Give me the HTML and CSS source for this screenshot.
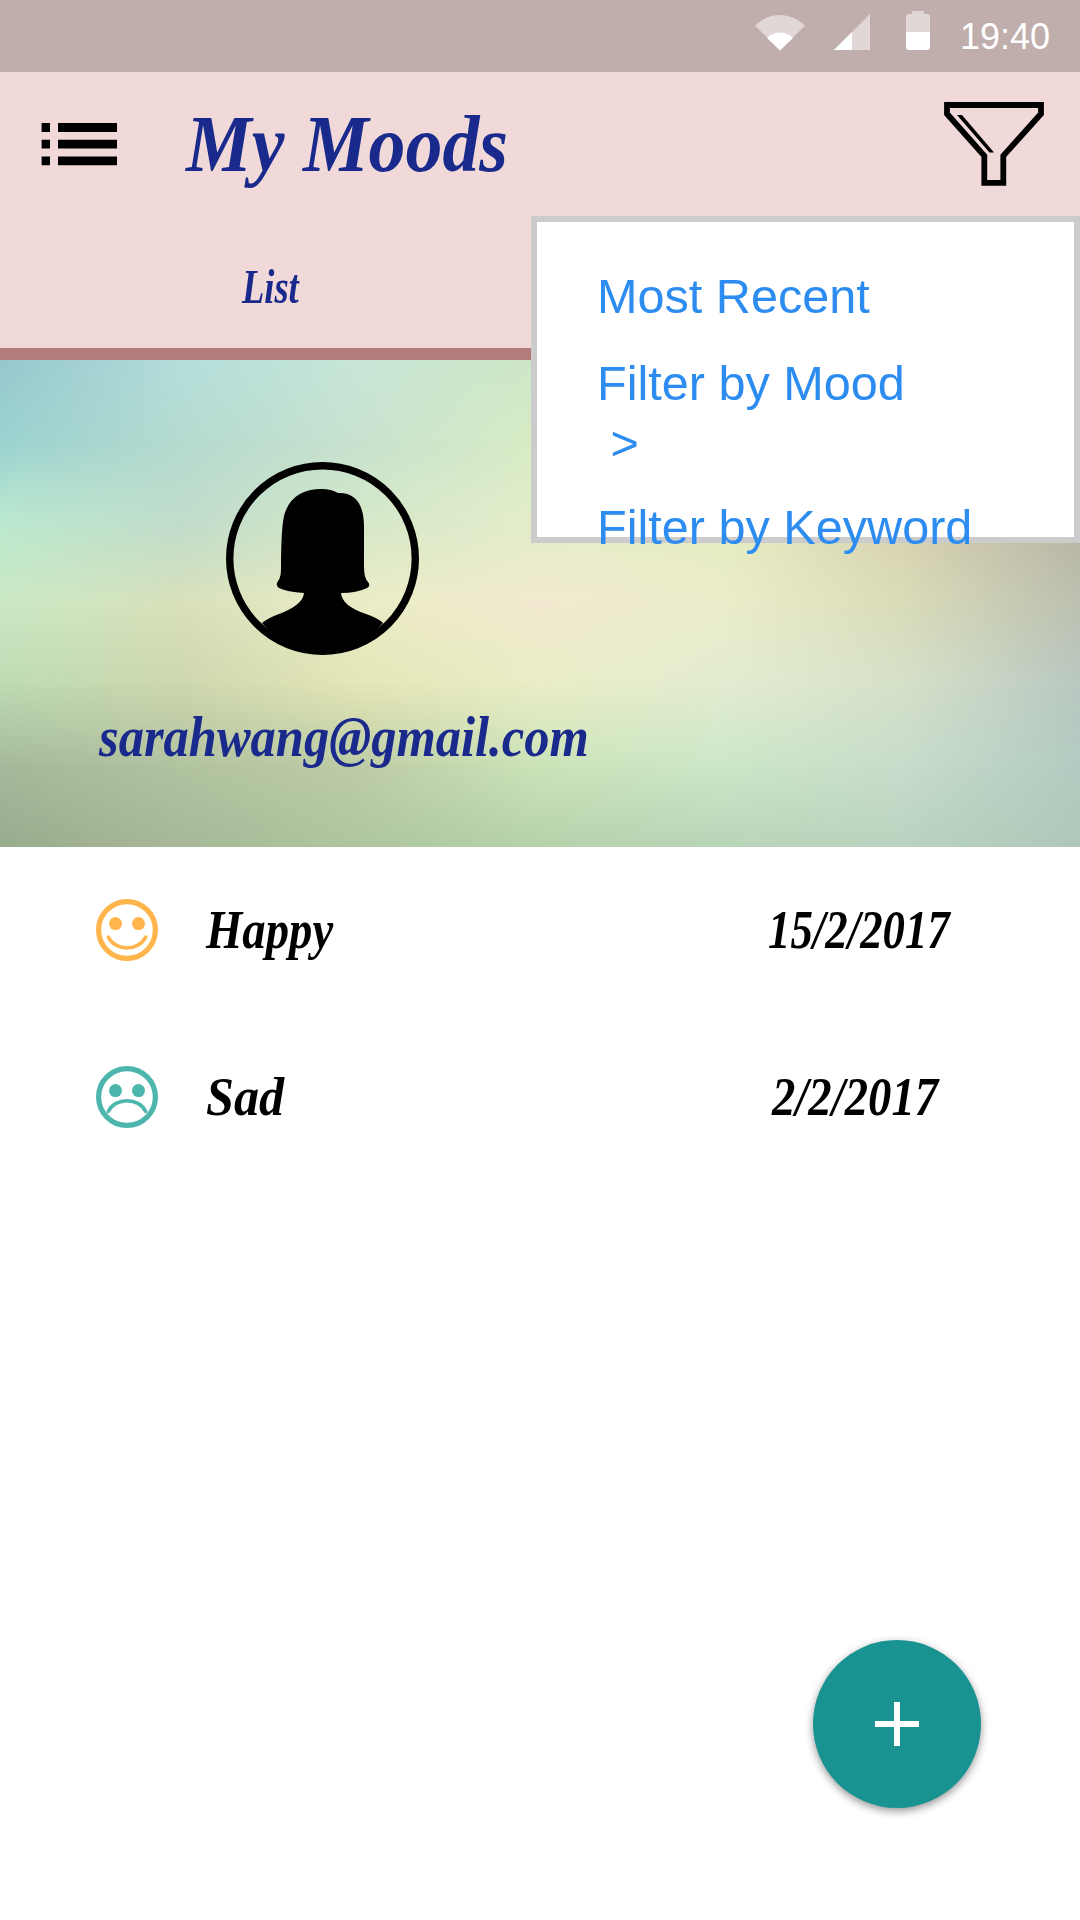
FILE: index.html
```html
<!DOCTYPE html>
<html lang="en">
<head>
<meta charset="utf-8">
<title>My Moods</title>
<link rel="stylesheet" href="styles.css">
</head>
<body>
<div class="screen">
  <div class="status-bar">
    <svg class="wifi" width="50" height="36" viewBox="0 0 50 36"><path d="M0 10.5Q11 0 25 0T50 10.5L25 35.5Z" fill="#fff" fill-opacity=".5"/><path d="M12 23Q18 17.5 25 17.5T38 23L25 35.5Z" fill="#fff"/></svg>
    <svg class="signal" width="36" height="36" viewBox="0 0 36 36"><path d="M0 36L36 0V36Z" fill="#fff" fill-opacity=".5"/><path d="M0 36L18 18V36Z" fill="#fff"/></svg>
    <svg class="battery" width="24" height="39" viewBox="0 0 24 39"><path d="M0 21V6Q0 3 3 3H6V0H18V3H21Q24 3 24 6V21Z" fill="#fff" fill-opacity=".5"/><path d="M0 21H24V36Q24 39 21 39H3Q0 39 0 36Z" fill="#fff"/></svg>
    <span class="time">19:40</span>
  </div>

  <header class="header">
    <div class="toolbar">
      <svg class="menu-icon" width="76" height="43" viewBox="0 0 76 43"><path d="M.6 0H9V9H.6ZM17 0H76V9H17ZM.6 16.8H9V25.5H.6ZM17 16.8H76V25.5H17ZM.6 33.5H9V42.3H.6ZM17 33.5H76V42.3H17Z"/></svg>
      <h1 class="title script">My Moods</h1>
      <svg class="filter-icon" width="100" height="84" viewBox="0 0 100 84"><path d="M3 3H97V11.8L59.3 53.8V80.8H40.3V53.8L3 11.8Z" fill="none" stroke="#000" stroke-width="5.8"/><path d="M13 13H18L50 50.5H45.5Z"/></svg>
    </div>
    <nav class="tabs"><div class="tab"><span class="tab-label script">List</span></div></nav>
  </header>

  <section class="profile">
    <div class="backdrop"><i class="band b1"></i><i class="band b2"></i><i class="band b3"></i><i class="band b4"></i><i class="band b5"></i><i class="band b6"></i><i class="band b7"></i></div>
    <svg class="avatar" width="193" height="193" viewBox="0 0 193 193"><circle cx="96.5" cy="96.5" r="92.8" fill="none" stroke="#000" stroke-width="7.4"/><path d="M36 161Q42 156 53 152Q77 143 78 131Q61 130 53 126Q49 123 52 119Q55 116 55 106Q55 68 58 54Q65 27 96 27Q105 27 112 31Q137 30 138 63V105Q138 116 142 120Q145 124 141 126Q131 131 115 131Q116 144 140 152Q152 156 157 161Q132 191 96.5 191T36 161Z"/></svg>
    <div class="email script">sarahwang@gmail.com</div>
  </section>

  <main class="moods">
    <div class="mood">
      <svg class="face happy" width="62" height="62" viewBox="0 0 62 62"><circle cx="31" cy="31" r="28.4" fill="none" stroke="currentColor" stroke-width="5.2"/><circle cx="19.5" cy="24.6" r="6.5" fill="currentColor"/><circle cx="42.5" cy="24.6" r="6.5" fill="currentColor"/><path d="M12.3 38C19 52.5 43 52.5 49.7 38" fill="none" stroke="currentColor" stroke-width="3.5" stroke-linecap="round"/></svg>
      <span class="mood-name script name-happy">Happy</span>
      <span class="date script date-first">15/2/2017</span>
    </div>
    <div class="mood">
      <svg class="face sad" width="62" height="62" viewBox="0 0 62 62"><circle cx="31" cy="31" r="28.4" fill="none" stroke="currentColor" stroke-width="5.2"/><circle cx="19.5" cy="24.6" r="6.5" fill="currentColor"/><circle cx="42.5" cy="24.6" r="6.5" fill="currentColor"/><path d="M12.3 45.5C19 31 43 31 49.7 45.5" fill="none" stroke="currentColor" stroke-width="3.5" stroke-linecap="round"/></svg>
      <span class="mood-name script name-sad">Sad</span>
      <span class="date script date-second">2/2/2017</span>
    </div>
  </main>

  <div class="popup">
    <div class="option">Most Recent</div>
    <div class="option">Filter by Mood<br>&nbsp;&gt;</div>
    <div class="option keyword">Filter by Keyword</div>
  </div>

  <button class="fab" aria-label="Add mood"><svg width="44" height="44" viewBox="0 0 44 44"><path d="M19 0H25V19H44V25H25V44H19V25H0V19H19Z" fill="#fff"/></svg></button>
</div>
</body>
</html>
```
FILE: styles.css
```css
* { box-sizing: border-box; }
body { margin: 0; background: #fff; }
svg { display: block; flex: none; }

.screen {
  position: relative;
  width: 1080px;
  height: 1920px;
  overflow: hidden;
  font-family: "Liberation Sans", sans-serif;
}

.script {
  font-family: "Liberation Serif", serif;
  font-weight: bold;
  font-style: italic;
  white-space: nowrap;
  transform-origin: left center;
}

.status-bar {
  display: flex;
  height: 72px;
  padding-left: 755px;
  background: #c0aeac;
}
.wifi { margin-top: 15px; }
.signal { margin: 14px 0 0 29px; }
.battery { margin: 11px 0 0 36px; }
.time {
  margin-left: 30px;
  line-height: 73px;
  font-size: 36px;
  color: #fff;
}

.header {
  height: 288px;
  background: #f0d9d8;
  border-bottom: 12px solid #b37b7a;
}
.toolbar {
  display: flex;
  height: 144px;
  padding: 0 36px 0 41px;
}
.menu-icon { margin-top: 51px; }
.title {
  width: 380px;
  margin: 36px 0 0 69px;
  line-height: 72px;
  font-size: 80px;
  color: #1a2a8c;
  transform: scaleX(.923);
}
.filter-icon { margin: 30px 0 0 auto; }
.tabs { display: flex; }
.tab {
  width: 540px;
  padding-top: 47px;
  text-align: center;
}
.tab-label {
  display: inline-block;
  line-height: 48px;
  font-size: 48px;
  color: #1a2a8c;
  transform: scaleX(.76);
  transform-origin: center;
}

.profile {
  position: relative;
  height: 487px;
  padding: 102px 0 0 99px;
}
.backdrop, .band {
  position: absolute;
  inset: 0;
}
.b1 { background: linear-gradient(90deg, #96c7ce, #b4dedb, #c8e7d8, #cee7c5, #d6eac4, #d8dcb8, #b0b0a0); }
.b2 {
  background: linear-gradient(90deg, #9bd2d0, #b4dacf, #c8e2cf, #d8ecc4, #e0eec0, #d8d8b0, #b0b09c);
  mask-image: linear-gradient(transparent 0, #000 16.67%);
}
.b3 {
  background: linear-gradient(90deg, #bbe9cf, #c0dccb, #d5e8c8, #e4edcb, #e6edc0, #d8d2b0, #b8b4a4);
  mask-image: linear-gradient(transparent 16.67%, #000 33.33%);
}
.b4 {
  background: linear-gradient(90deg, #cbe9c4, #d9e1bb, #ebecc6, #f2ead0, #ebedcb, #dadcb9, #bcc0b0);
  mask-image: linear-gradient(transparent 33.33%, #000 50%);
}
.b5 {
  background: linear-gradient(90deg, #bddbb3, #cdd6ae, #e4e6b6, #e9edc6, #e3ecd0, #d6e1c9, #b9c8c1);
  mask-image: linear-gradient(transparent 50%, #000 66.67%);
}
.b6 {
  background: linear-gradient(90deg, #a5b99a, #b2c3a0, #bdcca6, #cce3b9, #cce7c7, #c8dccb, #b2cbc1);
  mask-image: linear-gradient(transparent 66.67%, #000 83.33%);
}
.b7 {
  background: linear-gradient(90deg, #99ab8d, #a6b896, #aec5a0, #b5d2aa, #b8d4b8, #b9d3bf, #aec7b9);
  mask-image: linear-gradient(transparent 83.33%, #000 100%);
}
.avatar {
  position: relative;
  margin-left: 127px;
}
.email {
  position: relative;
  margin-top: 52px;
  line-height: 60px;
  font-size: 56px;
  color: #1a2a8c;
  transform: scaleX(.902);
}

.mood {
  display: flex;
  align-items: center;
  height: 167px;
  padding: 0 0 2px 96px;
  font-size: 54px;
}
.happy { color: #ffb54c; }
.sad { color: #4db6ac; }
.mood-name {
  width: 562px;
  margin-left: 48px;
}
.name-happy { transform: scaleX(.865); }
.name-sad { transform: scaleX(.93); }
.date-first { transform: scaleX(.83); }
.date-second {
  margin-left: 4px;
  transform: scaleX(.865);
}

.popup {
  position: absolute;
  top: 216px;
  left: 531px;
  width: 549px;
  height: 327px;
  padding: 44px 0 0 60px;
  background: #fff;
  border: 6px solid #ccc;
  line-height: 60px;
  font-size: 48.6px;
  color: #2d8cf0;
}
.option { margin-bottom: 27px; }
.keyword { margin-top: -3px; }

.fab {
  position: absolute;
  top: 1640px;
  left: 813px;
  display: flex;
  align-items: center;
  justify-content: center;
  width: 168px;
  height: 168px;
  padding: 0;
  border: 0;
  border-radius: 50%;
  background: #189392;
  box-shadow: 0 3px 9px rgba(0, 0, 0, .42);
}
```
